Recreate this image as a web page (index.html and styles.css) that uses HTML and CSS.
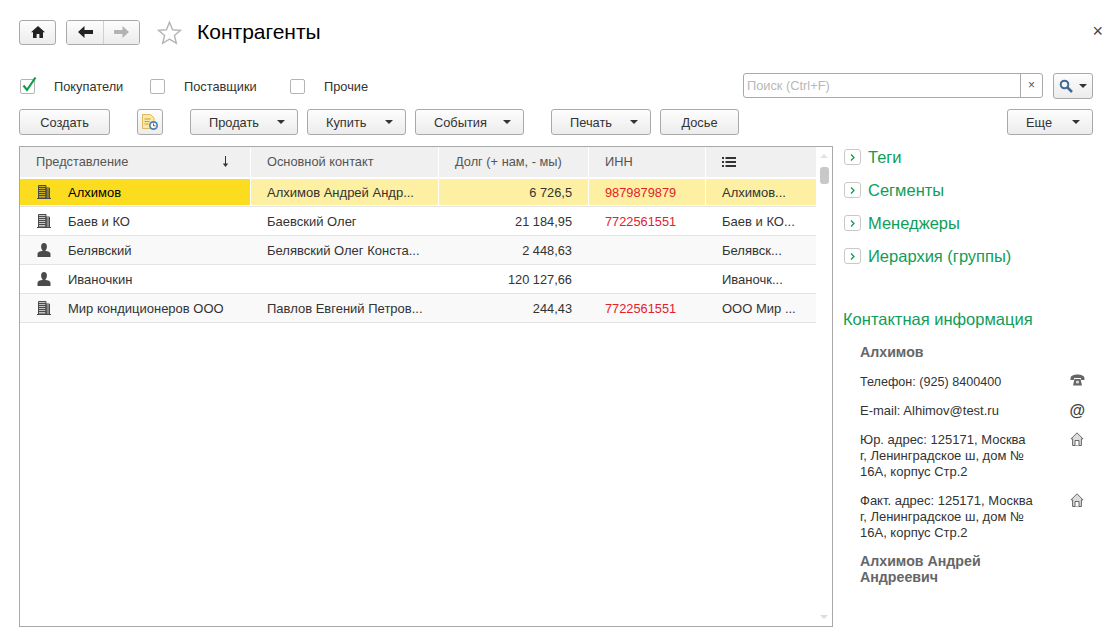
FILE: index.html
```html
<!DOCTYPE html>
<html lang="ru">
<head>
  <meta charset="UTF-8">
  <title>Контрагенты</title>
  <link rel="stylesheet" href="styles.css">
</head>
<body>
<svg class="defs" width="0" height="0">
  <symbol id="i-org" viewBox="0 0 14 14">
    <path d="M2 1h7v12H2zM9 3.500h3.500V13H9z" fill="currentColor" fill-opacity=".3"/>
    <path d="M1.500.500h7.500v12.500H1.500zM9 3h3.500v10H9z" fill="none" stroke="currentColor"/>
    <path d="M2 2.500h7M2 4.500h7M2 6.500h7M2 8.500h7M2 10.500h7M9 5h3M9 7h3M9 9h3M9 11h3" stroke="currentColor"/>
    <path d="M0 13h14v1H0z" fill="currentColor"/>
  </symbol>
  <symbol id="i-person" viewBox="0 0 14 14">
    <ellipse cx="7" cy="3.800" rx="2.900" ry="3.700" fill="currentColor"/>
    <path d="M5.500 6h3v2c2.600.3 5 1 5 2.800V14H.5v-3.200c0-1.800 2.400-2.500 5-2.800z" fill="currentColor"/>
  </symbol>
  <symbol id="i-house" viewBox="0 0 14 14">
    <path d="M7 .8 1 6.800h1.600v6.700h8.800V6.800H13z" fill="#dcdcdc" stroke="#666"/>
    <path d="M5 13.500V8.500h4v5" fill="#fff" stroke="#666"/>
  </symbol>
</svg>

<header class="topbar">
  <button class="btn btn-home">
    <svg width="14" height="12" viewBox="0 0 14 12"><path d="M7 0 0 6.200h2V12h3.600V8h2.800v4H12V6.200h2z" fill="#222"/></svg>
  </button>
  <div class="nav-group">
    <button class="btn nav-btn">
      <svg width="15" height="12" viewBox="0 0 15 12"><path d="M6.500 0v4H15v4H6.500v4L0 6z" fill="#222"/></svg>
    </button>
    <button class="btn nav-btn">
      <svg width="15" height="12" viewBox="0 0 15 12"><path d="M8.500 0v4H0v4h8.500v4L15 6z" fill="#b3b3b3"/></svg>
    </button>
  </div>
  <svg class="star" width="25" height="25" viewBox="0 0 26 25"><path d="M13 1.800l3.200 7.800 8.300.6-6.400 5.400 2 8.100-7.100-4.400-7.100 4.400 2-8.100L1.500 10.200l8.300-.6z" fill="#fff" stroke="#b5b5b5" stroke-width="1.500"/></svg>
  <h1 class="title">Контрагенты</h1>
  <span class="close">×</span>
</header>

<div class="filters">
  <label class="check first">
    <span class="box"><svg width="16" height="17" viewBox="0 0 16 17"><path d="M2.500 9.500 6 14 14.500 1.500" fill="none" stroke="#0f9d4a" stroke-width="2.200"/></svg></span>
    Покупатели
  </label>
  <label class="check"><span class="box"></span>Поставщики</label>
  <label class="check"><span class="box"></span>Прочие</label>
  <div class="search">
    <div class="search-input">
      <span class="placeholder">Поиск (Ctrl+F)</span>
      <span class="search-clear">×</span>
    </div>
    <button class="btn search-btn">
      <svg width="14" height="14" viewBox="0 0 14 14"><circle cx="5.500" cy="5.500" r="3.800" fill="none" stroke="#3f6a93" stroke-width="2"/><path d="M8.500 8.500 13 13" stroke="#3f6a93" stroke-width="2.500"/></svg>
      <i class="arrow"></i>
    </button>
  </div>
</div>

<div class="toolbar">
  <button class="btn tool create">Создать</button>
  <button class="btn report-btn">
    <svg width="17" height="17" viewBox="0 0 17 17">
      <path d="M.5.500h8l3.500 3.500v10.500H.500z" fill="#fbe9a9" stroke="#dcb95c"/>
      <path d="M2.500 5h6M2.500 7.500h5M2.500 10h4" stroke="#c9963a"/>
      <circle cx="11.500" cy="11.500" r="4.500" fill="#4f81ad"/><circle cx="11.500" cy="11.500" r="2.800" fill="#fff"/><path d="M11.500 9.500v2.300h2" stroke="#c0392b" fill="none"/>
    </svg>
  </button>
  <button class="btn tool sell">Продать<i class="arrow"></i></button>
  <button class="btn tool buy">Купить<i class="arrow"></i></button>
  <button class="btn tool events">События<i class="arrow"></i></button>
  <button class="btn tool print">Печать<i class="arrow"></i></button>
  <button class="btn tool dossier">Досье</button>
  <button class="btn tool more">Еще<i class="arrow"></i></button>
</div>

<main class="content">
  <section class="list">
    <div class="list-body">
      <div class="row head">
        <div class="cell c1">Представление
          <svg class="sort" width="7" height="11" viewBox="0 0 7 11"><path d="M3.500 0v9" stroke="#333"/><path d="M.8 7.500h5.400L3.500 11z" fill="#333"/></svg>
        </div>
        <div class="cell c2">Основной контакт</div>
        <div class="cell c3 left">Долг (+ нам, - мы)</div>
        <div class="cell c4">ИНН</div>
        <div class="cell c5">
          <svg width="14" height="10" viewBox="0 0 14 10"><path d="M0 0h2v2H0zM3.500 0H14v2H3.500zM0 4h2v2H0zM3.500 4H14v2H3.500zM0 8h2v2H0zM3.500 8H14v2H3.500z" fill="#333"/></svg>
        </div>
      </div>
      <div class="row selected">
        <div class="cell c1"><svg class="ico"><use href="#i-org"/></svg>Алхимов</div>
        <div class="cell c2">Алхимов Андрей Андр...</div>
        <div class="cell c3">6 726,5</div>
        <div class="cell c4 inn">9879879879</div>
        <div class="cell c5">Алхимов...</div>
      </div>
      <div class="row">
        <div class="cell c1"><svg class="ico"><use href="#i-org"/></svg>Баев и КО</div>
        <div class="cell c2">Баевский Олег</div>
        <div class="cell c3">21 184,95</div>
        <div class="cell c4 inn">7722561551</div>
        <div class="cell c5">Баев и КО...</div>
      </div>
      <div class="row alt">
        <div class="cell c1"><svg class="ico"><use href="#i-person"/></svg>Белявский</div>
        <div class="cell c2">Белявский Олег Конста...</div>
        <div class="cell c3">2 448,63</div>
        <div class="cell c4 inn"></div>
        <div class="cell c5">Белявск...</div>
      </div>
      <div class="row">
        <div class="cell c1"><svg class="ico"><use href="#i-person"/></svg>Иваночкин</div>
        <div class="cell c2"></div>
        <div class="cell c3">120 127,66</div>
        <div class="cell c4 inn"></div>
        <div class="cell c5">Иваночк...</div>
      </div>
      <div class="row alt">
        <div class="cell c1"><svg class="ico"><use href="#i-org"/></svg>Мир кондиционеров ООО</div>
        <div class="cell c2">Павлов Евгений Петров...</div>
        <div class="cell c3">244,43</div>
        <div class="cell c4 inn">7722561551</div>
        <div class="cell c5">ООО Мир ...</div>
      </div>
    </div>
    <div class="scrollbar">
      <i class="scroll-up"></i>
      <i class="thumb"></i>
      <i class="scroll-down"></i>
    </div>
  </section>

  <aside class="side">
    <div class="group"><span class="expand"><svg width="5" height="7" viewBox="0 0 5 7"><path d="M1 .5 4 3.500 1 6.500" fill="none" stroke="#0f9d4a" stroke-width="1.300"/></svg></span>Теги</div>
    <div class="group"><span class="expand"><svg width="5" height="7" viewBox="0 0 5 7"><path d="M1 .5 4 3.500 1 6.500" fill="none" stroke="#0f9d4a" stroke-width="1.300"/></svg></span>Сегменты</div>
    <div class="group"><span class="expand"><svg width="5" height="7" viewBox="0 0 5 7"><path d="M1 .5 4 3.500 1 6.500" fill="none" stroke="#0f9d4a" stroke-width="1.300"/></svg></span>Менеджеры</div>
    <div class="group"><span class="expand"><svg width="5" height="7" viewBox="0 0 5 7"><path d="M1 .5 4 3.500 1 6.500" fill="none" stroke="#0f9d4a" stroke-width="1.300"/></svg></span>Иерархия (группы)</div>

    <h2 class="contact-title">Контактная информация</h2>
    <div class="contact">
      <div class="contact-name">Алхимов</div>
      <div class="contact-row phone">
        <span class="contact-text">Телефон: (925) 8400400</span>
        <svg width="15" height="12" viewBox="0 0 15 12"><path d="M.5 4.500C.5 1.500 4 .5 7.500.5s7 1 7 4v1.500h-3.500V4H4v2H.5z" fill="#666"/><path d="M3 11.500 4.500 5h6L12 11.500z" fill="#666"/><circle cx="7.500" cy="8" r="1.600" fill="#ddd"/></svg>
      </div>
      <div class="contact-row">
        <span class="contact-text">E-mail: Alhimov@test.ru</span>
        <span class="at">@</span>
      </div>
      <div class="contact-row">
        <span class="contact-text">Юр. адрес: 125171, Москва г, Ленинградское ш, дом № 16А, корпус Стр.2</span>
        <svg class="house"><use href="#i-house"/></svg>
      </div>
      <div class="contact-row">
        <span class="contact-text">Факт. адрес: 125171, Москва г, Ленинградское ш, дом № 16А, корпус Стр.2</span>
        <svg class="house"><use href="#i-house"/></svg>
      </div>
      <div class="contact-name person">Алхимов Андрей Андреевич</div>
    </div>
  </aside>
</main>
</body>
</html>
```

FILE: styles.css
```css
* { box-sizing: border-box; }
html, body { height: 100%; }
body { margin: 0; padding: 19px 0 14px 19px; background: #fff; color: #333;
  font-family: "Liberation Sans", Arial, sans-serif; font-size: 12.8px;
  display: flex; flex-direction: column; overflow: hidden; }
.defs { position: absolute; }

.btn { display: inline-flex; align-items: center; justify-content: center; padding: 0; margin: 0;
  border: 1px solid #a9a9a9; border-radius: 3px; color: #333;
  background: linear-gradient(#fdfdfd, #ececec);
  font: 12.8px "Liberation Sans", Arial, sans-serif; }

/* top line */
.topbar { display: flex; align-items: center; height: 26px; position: relative; }
.btn-home { width: 37px; height: 25px; }
.nav-group { display: flex; margin-left: 10px; border: 1px solid #a9a9a9; border-radius: 3px; height: 25px; overflow: hidden; }
.nav-btn { width: 36px; border: 0; border-radius: 0; }
.nav-btn + .nav-btn { border-left: 1px solid #d0d0d0; }
.star { margin-left: 17px; }
.title { margin: 0 0 0 15px; font-size: 21px; font-weight: normal; color: #000; }
.close { position: absolute; right: 16px; top: 2px; font-size: 18px; color: #444; }

/* filters */
.filters { display: flex; align-items: center; height: 26px; margin-top: 28px; padding-right: 26px; }
.check { display: flex; align-items: center; width: 140px; }
.check.first { width: 131px; }
.box { position: relative; width: 15px; height: 15px; margin: 1px 19px 0 0; border: 1px solid #b4b4b4; border-radius: 2px; flex: none; }
.first .box { margin-left: 1px; }
.box svg { position: absolute; left: 0; top: -4px; }
.search { display: flex; margin-left: auto; }
.search-input { display: flex; align-items: center; justify-content: space-between; width: 300px; height: 25px;
  border: 1px solid #a9a9a9; border-radius: 3px; }
.placeholder { padding-left: 3px; color: #b8b8b8; }
.search-clear { width: 22px; height: 100%; border-left: 1px solid #a9a9a9; text-align: center; line-height: 23px; font-size: 12px; color: #555; }
.search-btn { width: 40px; height: 26px; margin-left: 10px; gap: 6px; }

/* toolbar */
.toolbar { display: flex; height: 26px; margin-top: 10px; padding-right: 26px; }
.tool { height: 26px; position: relative; justify-content: flex-start; padding-top: 1px; }
.arrow { display: inline-block; border: 4px solid transparent; border-top: 4px solid #333; border-bottom: 0; }
.tool .arrow { position: absolute; right: 12px; top: 10px; }
.create { width: 91px; justify-content: center; }
.report-btn { width: 26px; height: 26px; margin: 0 27px; }
.sell { width: 108px; padding-left: 18px; }
.buy { width: 99px; padding-left: 18px; margin-left: 9px; }
.events { width: 109px; padding-left: 18px; margin-left: 9px; }
.print { width: 100px; padding-left: 18px; margin-left: 27px; }
.dossier { width: 79px; margin-left: 9px; justify-content: center; }
.more { width: 86px; padding-left: 18px; margin-left: auto; }

/* list + side */
.content { flex: 1; display: flex; margin-top: 11px; min-height: 0; }
.list { width: 814px; display: flex; border: 1px solid #a9a9a9; }
.list-body { width: 796px; }
.row { display: grid; grid-template-columns: 230px 188px 150px 117px 111px; height: 29px; border-bottom: 1px solid #e3e3e3; font-size: 13px; }
.cell { display: flex; align-items: center; padding: 0 16px; white-space: nowrap; border-left: 1px solid transparent; }
.cell:first-child { border-left: 0; }
.head { height: 32px; border-bottom: 0; padding-bottom: 2px; font-size: 12.8px; }
.head .cell { background: #f0f0f0; color: #555; border-left-color: #fff; padding-bottom: 1px; }
.sort { margin-left: auto; margin-right: 5px; }
.c3, .c4 { font-size: 12.8px; }
.c3 { justify-content: flex-end; }
.c3.left { justify-content: flex-start; }
.alt { background: #f9f9f9; }
.selected { height: 28px; }
.selected .cell { background: #fdf0a3; border-left-color: #fff; margin-bottom: 1px; }
.selected .c1 { background: #fcdc1f; color: #000; }
.ico { width: 14px; height: 14px; margin: 0 17px 0 1px; color: #4a4a4a; flex: none; }
.inn { color: #e4202a; }

.scrollbar { flex: 1; position: relative; }
.thumb { position: absolute; left: 4px; top: 20px; width: 9px; height: 17px; background: #c8c8c8; border-radius: 3px; }
.scroll-up, .scroll-down { position: absolute; left: 4px; border: 4px solid transparent; }
.scroll-up { top: 7px; border-top: 0; border-bottom: 4px solid #e2e2e2; }
.scroll-down { bottom: 7px; border-bottom: 0; border-top: 4px solid #dcdcdc; }

.side { flex: 1; padding-left: 11px; min-width: 0; }
.group { display: flex; align-items: center; height: 22px; margin-bottom: 11px; font-size: 16.5px; color: #0f9d58; }
.expand { display: flex; align-items: center; justify-content: center; width: 17px; height: 16px; margin-right: 7px;
  border: 1px solid #c9c9c9; border-radius: 3px; }
.contact-title { margin: 43px 0 0 -1px; font-size: 16.5px; font-weight: normal; color: #0f9d58; line-height: 18px; }
.contact { width: 241px; padding: 16px 0 0 16px; font-size: 13px; }
.contact-name { font-weight: bold; font-size: 14.2px; color: #666; line-height: 16px; }
.person { width: 140px; margin-top: 12px; }
.contact-row { display: flex; justify-content: space-between; align-items: flex-start; margin-top: 13px; line-height: 16px; }
.phone { margin-top: 14px; font-size: 12.6px; }
.contact-text { width: 174px; }
.at { font-weight: bold; font-size: 16px; line-height: 15px; color: #444; }
.house { width: 14px; height: 14px; margin-right: 1px; }
```
